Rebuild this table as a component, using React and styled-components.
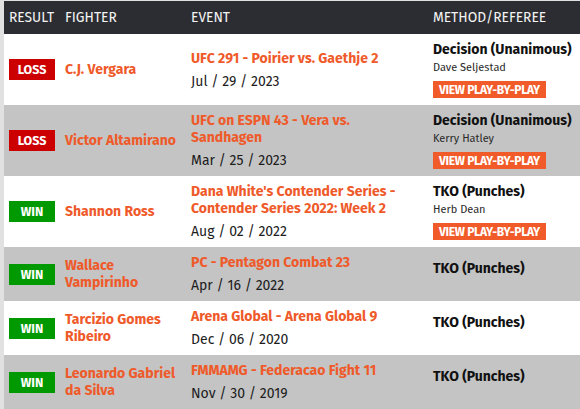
import React from "react";
import styled, { createGlobalStyle } from "styled-components";

const GlobalStyle = createGlobalStyle`
  html, body {
    margin: 0;
    padding: 0;
    background: #e1e1e1;
    font-family: "Fira Sans", Lato, "Noto Sans", sans-serif;
  }
`;

const fights = [
  {
    result: "loss",
    fighter: "C.J. Vergara",
    event: "UFC 291 - Poirier vs. Gaethje 2",
    date: "Jul / 29 / 2023",
    method: "Decision (Unanimous)",
    referee: "Dave Seljestad",
    pbp: true,
  },
  {
    result: "loss",
    fighter: "Victor Altamirano",
    event: "UFC on ESPN 43 - Vera vs. Sandhagen",
    date: "Mar / 25 / 2023",
    method: "Decision (Unanimous)",
    referee: "Kerry Hatley",
    pbp: true,
  },
  {
    result: "win",
    fighter: "Shannon Ross",
    event: "Dana White's Contender Series - Contender Series 2022: Week 2",
    date: "Aug / 02 / 2022",
    method: "TKO (Punches)",
    referee: "Herb Dean",
    pbp: true,
  },
  {
    result: "win",
    fighter: "Wallace Vampirinho",
    event: "PC - Pentagon Combat 23",
    date: "Apr / 16 / 2022",
    method: "TKO (Punches)",
    referee: "",
  },
  {
    result: "win",
    fighter: "Tarcizio Gomes Ribeiro",
    event: "Arena Global - Arena Global 9",
    date: "Dec / 06 / 2020",
    method: "TKO (Punches)",
    referee: "",
  },
  {
    result: "win",
    fighter: "Leonardo Gabriel da Silva",
    event: "FMMAMG - Federacao Fight 11",
    date: "Nov / 30 / 2019",
    method: "TKO (Punches)",
    referee: "",
  },
];

const SPage = styled.div`
  padding: 1px 0 0 4px;
  overflow: hidden;
`;

const STable = styled.div`
  width: 576px;
`;

const SRow = styled.div`
  display: grid;
  grid-template-columns: 56px 126px 242px 1fr;
  align-items: center;
  padding: 7px 0;
  background-color: ${(props) => (props.$shaded ? "#c4c4c4" : "#ffffff")};
`;

const SHeadRow = styled.div`
  display: grid;
  grid-template-columns: 56px 126px 242px 1fr;
  align-items: center;
  height: 33px;
  background-color: #2c2d32;
`;

const SHeadCell = styled.div`
  padding-left: 5px;
  color: #f4f4f4;
  font-size: 13.8px;
  text-transform: uppercase;
`;

const SCell = styled.div`
  padding-left: 5px;
`;

const SBadge = styled.div`
  width: 46px;
  height: 21px;
  display: flex;
  align-items: center;
  justify-content: center;
  color: #ffffff;
  font-size: 12.5px;
  font-weight: 700;
  text-transform: uppercase;
  background-color: ${(props) => (props.$win ? "#009900" : "#cc0000")};
`;

const SFighter = styled.div`
  max-width: 116px;
  color: #ef5a2a;
  font-size: 14px;
  font-weight: 700;
  line-height: 17px;
`;

const SEvent = styled.div`
  max-width: 225px;
  color: #ef5a2a;
  font-size: 14px;
  font-weight: 700;
  line-height: 17px;
`;

const SDate = styled.div`
  margin-top: 6px;
  color: #1c1c1c;
  font-size: 14px;
  line-height: 17px;
`;

const SMethod = styled.div`
  color: #111111;
  font-size: 14px;
  font-weight: 700;
  line-height: 18px;
`;

const SReferee = styled.div`
  min-height: 9px;
  margin-top: 2px;
  color: #2a2a2a;
  font-size: 11px;
  line-height: 14px;
`;

const SButton = styled.div`
  display: flex;
  align-items: center;
  width: fit-content;
  height: 17px;
  margin-top: 6px;
  padding: 0 6px;
  color: #ffffff;
  font-size: 12px;
  font-weight: 700;
  text-transform: uppercase;
  letter-spacing: -0.3px;
  background-color: #f15a29;
`;

const FightRow = ({ fight, shaded }) => (
  <SRow $shaded={shaded}>
    <SCell>
      <SBadge $win={fight.result === "win"}>{fight.result}</SBadge>
    </SCell>
    <SCell>
      <SFighter>{fight.fighter}</SFighter>
    </SCell>
    <SCell>
      <SEvent>{fight.event}</SEvent>
      <SDate>{fight.date}</SDate>
    </SCell>
    <SCell>
      <SMethod>{fight.method}</SMethod>
      <SReferee>{fight.referee}</SReferee>
      {fight.pbp && <SButton>View Play-by-Play</SButton>}
    </SCell>
  </SRow>
);

const App = () => (
  <>
    <GlobalStyle />
    <SPage>
      <STable>
        <SHeadRow>
          <SHeadCell>Result</SHeadCell>
          <SHeadCell>Fighter</SHeadCell>
          <SHeadCell>Event</SHeadCell>
          <SHeadCell>Method/Referee</SHeadCell>
        </SHeadRow>
        {fights.map((fight, i) => (
          <FightRow key={i} fight={fight} shaded={i % 2 === 1} />
        ))}
      </STable>
    </SPage>
  </>
);

export default App;
